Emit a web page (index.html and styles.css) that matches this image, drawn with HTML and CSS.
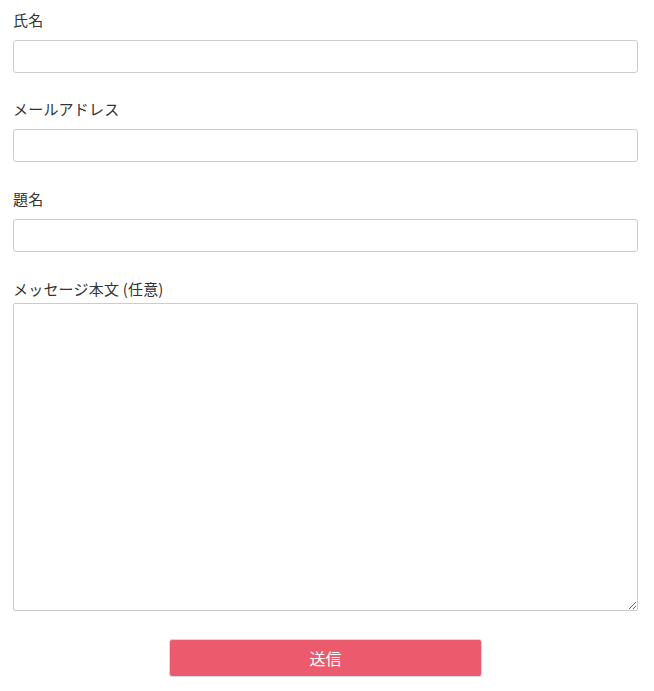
FILE: index.html
```html
<!DOCTYPE html>
<html lang="ja">
<head>
<meta charset="utf-8">
<title>お問い合わせ</title>
<link rel="stylesheet" href="styles.css">
</head>
<body>
<form class="contact-form">
  <div class="field field-first">
    <label class="field-label" for="name">氏名</label>
    <input class="field-input" id="name" type="text">
  </div>
  <div class="field">
    <label class="field-label" for="email">メールアドレス</label>
    <input class="field-input" id="email" type="email">
  </div>
  <div class="field">
    <label class="field-label" for="subject">題名</label>
    <input class="field-input" id="subject" type="text">
  </div>
  <div class="field field-message">
    <label class="field-label" for="message">メッセージ本文 (任意)</label>
    <textarea class="field-textarea" id="message"></textarea>
  </div>
  <div class="actions">
    <button class="submit-btn" type="submit">送信</button>
  </div>
</form>
</body>
</html>
```
FILE: styles.css
```css
html, body {
  margin: 0;
  padding: 0;
  background: #fff;
}

body {
  font-family: "Noto Sans CJK JP", "Noto Sans", sans-serif;
  color: #333;
  font-size: 15px;
}

.contact-form {
  display: flex;
  flex-direction: column;
  padding: 9px 16px 0 13px;
}

.field {
  display: flex;
  flex-direction: column;
  margin-bottom: 26px;
}

.field-first {
  margin-bottom: 25px;
}

.field-label {
  font-size: 15px;
  line-height: 22px;
  margin-bottom: 9px;
  letter-spacing: 0.2px;
}

.field-input {
  box-sizing: border-box;
  height: 33px;
  width: 100%;
  border: 1px solid #cccccc;
  border-radius: 3px;
  padding: 4px 8px;
  font: inherit;
  background: #fff;
  margin: 0;
}

.field-message .field-label {
  margin-bottom: 3px;
}

.field-textarea {
  box-sizing: border-box;
  height: 308px;
  width: 100%;
  border: 1px solid #cccccc;
  border-radius: 2px;
  padding: 4px 8px;
  font: inherit;
  margin: 0;
  display: block;
}

.field-message {
  margin-bottom: 28px;
}

.actions {
  display: flex;
  justify-content: center;
}

.submit-btn {
  width: 313px;
  height: 38px;
  background: #ec5a6e;
  color: #fff;
  border: 1px solid #d9d9d9;
  border-radius: 3px;
  font-family: "Noto Sans CJK JP", "Noto Sans", sans-serif;
  font-size: 16px;
  cursor: pointer;
}
```
